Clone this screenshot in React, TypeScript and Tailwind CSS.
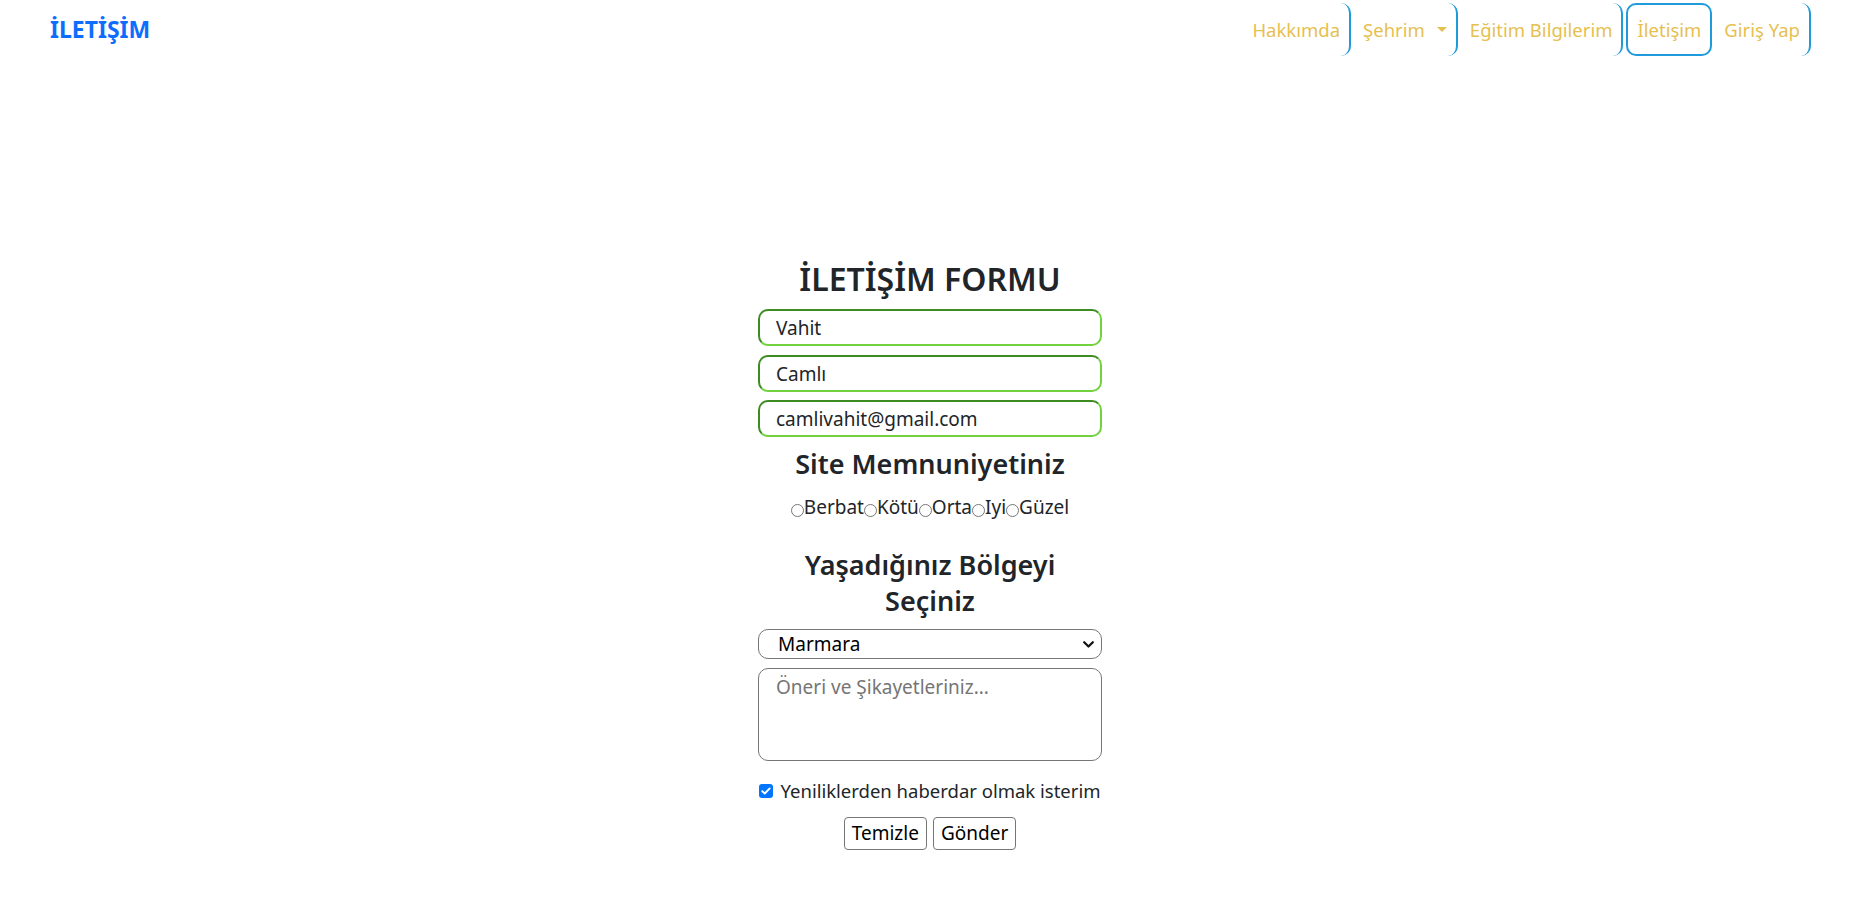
import React from "react";

const navItem =
  "h-[53px] flex items-center px-[9px] border-r-2 border-[#1f9bdc] rounded-[10px] text-[#e6c04f] text-[18.5px] whitespace-nowrap";

const inputCls =
  "w-full h-[37px] rounded-[10px] border-2 border-t-[#3c8c21] border-l-[#3c8c21] border-b-[#72d23e] border-r-[#72d23e] pl-[16px] text-[19px] text-[#212529] bg-white outline-none";

function Radio({ label }: { label: string }) {
  return (
    <span className="whitespace-nowrap">
      <span className="inline-block w-[13px] h-[13px] rounded-full border border-[#767676] bg-white align-[-3px]" />
      {label}
    </span>
  );
}

export default function App() {
  return (
    <div className="min-h-[907px] bg-white font-['Segoe_UI','Noto_Sans',sans-serif] text-[#212529]">
      <nav className="flex items-start justify-between pl-[50px] pr-[60px] pt-[3px]">
        <a className="h-[52px] flex items-center text-[23px] font-bold text-[#0d6efd]">İLETİŞİM</a>
        <ul className="flex items-center gap-[3px]">
          <li className={navItem}>Hakkımda</li>
          <li className={navItem}>
            Şehrim
            <span className="ml-[12px] inline-block w-0 h-0 border-x-[5px] border-x-transparent border-t-[5px] border-t-[#e6c04f]" />
          </li>
          <li className={navItem}>Eğitim Bilgilerim</li>
          <li className="h-[53px] flex items-center px-[9px] border-2 border-[#1f9bdc] rounded-[10px] text-[#e6c04f] text-[18.5px] whitespace-nowrap">
            İletişim
          </li>
          <li className={navItem}>Giriş Yap</li>
        </ul>
      </nav>

      <main className="flex justify-center pr-[11px] pt-[202px]">
        <form className="w-[344px] flex flex-col items-center">
          <h3 className="h-[42px] text-[32px] leading-[42px] font-semibold text-center whitespace-nowrap">İLETİŞİM FORMU</h3>
          <input readOnly value="Vahit" className={`${inputCls} mt-[9px]`} />
          <input readOnly value="Camlı" className={`${inputCls} mt-[9px]`} />
          <input readOnly value="camlivahit@gmail.com" className={`${inputCls} mt-[8px]`} />

          <h4 className="mt-[9px] text-[27px] leading-[36px] font-semibold text-center whitespace-nowrap">Site Memnuniyetiniz</h4>
          <div className="mt-[10px] text-[19px] leading-[30px] text-center whitespace-nowrap">
            <Radio label="Berbat" />
            <Radio label="Kötü" />
            <Radio label="Orta" />
            <Radio label="Iyi" />
            <Radio label="Güzel" />
          </div>

          <h4 className="mt-[25px] text-[27px] leading-[36px] font-semibold text-center">
            Yaşadığınız Bölgeyi
            <br />
            Seçiniz
          </h4>

          <div className="mt-[10px] w-full h-[30px] border border-[#767676] rounded-[10px] flex items-center justify-between pl-[19px] pr-[7px] text-[19px] text-black bg-white">
            <span>Marmara</span>
            <svg width="11" height="7" viewBox="0 0 11 7" fill="none">
              <path d="M1.2 1.2 L5.5 5.5 L9.8 1.2" stroke="#111" strokeWidth="2.2" strokeLinecap="round" strokeLinejoin="round" />
            </svg>
          </div>

          <textarea
            readOnly
            placeholder="Öneri ve Şikayetleriniz..."
            className="mt-[9px] w-full h-[93px] border border-[#767676] rounded-[10px] pl-[17px] pt-[5px] text-[19px] leading-[26px] resize-none outline-none placeholder:text-[#757575]"
          />

          <div className="mt-[15px] h-[30px] flex items-center gap-[7px] text-[18.5px] whitespace-nowrap">
            <span className="w-[14px] h-[14px] shrink-0 rounded-[3px] bg-[#0075ff] flex items-center justify-center">
              <svg width="10" height="8" viewBox="0 0 10 8" fill="none">
                <path d="M1.3 4.2 L3.8 6.5 L8.7 1.4" stroke="white" strokeWidth="1.9" strokeLinecap="round" strokeLinejoin="round" />
              </svg>
            </span>
            <span>Yeniliklerden haberdar olmak isterim</span>
          </div>

          <div className="mt-[11px] flex gap-[6px]">
            <button type="button" className="h-[33px] px-[7px] border border-[#767676] rounded-[4px] bg-white text-[19px] text-black">
              Temizle
            </button>
            <button type="button" className="h-[33px] px-[7px] border border-[#767676] rounded-[4px] bg-white text-[19px] text-black">
              Gönder
            </button>
          </div>
        </form>
      </main>
    </div>
  );
}
